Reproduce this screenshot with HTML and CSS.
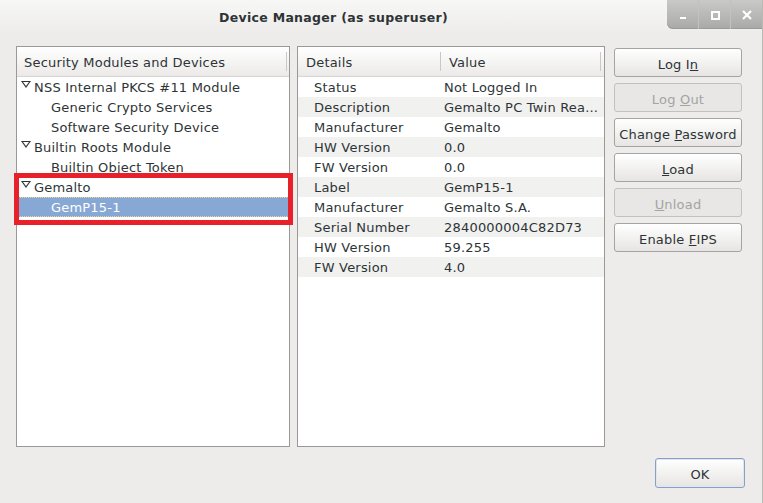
FILE: index.html
```html
<!DOCTYPE html>
<html lang="en">
<head>
    <meta charset="UTF-8">
    <title>Device Manager (as superuser)</title>
    <link rel="stylesheet" href="styles.css">
</head>
<body>
    <div class="window">
        <div class="titlebar">
            <div class="title">Device Manager (as superuser)</div>
            <div class="controls">
                <div class="ctl">
                    <svg width="10" height="10" viewBox="0 0 10 10"><rect x="2" y="7" width="6" height="2" fill="#fff"/></svg>
                </div>
                <div class="ctl">
                    <svg width="10" height="10" viewBox="0 0 10 10"><rect x="2" y="2" width="7" height="7" fill="none" stroke="#fff" stroke-width="2"/></svg>
                </div>
                <div class="ctl">
                    <svg width="12" height="12" viewBox="0 0 12 12"><path d="M2 2 L10 10 M10 2 L2 10" stroke="#fff" stroke-width="2.2"/></svg>
                </div>
            </div>
        </div>

        <div class="content">
            <div class="panes">
                <div class="pane tree">
                    <div class="header">
                        <div class="col">Security Modules and Devices</div>
                    </div>
                    <div class="row top"><span class="twisty"></span>NSS Internal PKCS #11 Module</div>
                    <div class="row child">Generic Crypto Services</div>
                    <div class="row child">Software Security Device</div>
                    <div class="row top"><span class="twisty"></span>Builtin Roots Module</div>
                    <div class="row child">Builtin Object Token</div>
                    <div class="row top"><span class="twisty"></span>Gemalto</div>
                    <div class="row child selected">GemP15-1</div>
                    <div class="highlight"></div>
                </div>

                <div class="pane details">
                    <div class="header">
                        <div class="col name">Details</div>
                        <div class="col value">Value</div>
                    </div>
                    <div class="drow"><span class="name">Status</span><span class="value">Not Logged In</span></div>
                    <div class="drow"><span class="name">Description</span><span class="value">Gemalto PC Twin Rea...</span></div>
                    <div class="drow"><span class="name">Manufacturer</span><span class="value">Gemalto</span></div>
                    <div class="drow"><span class="name">HW Version</span><span class="value">0.0</span></div>
                    <div class="drow"><span class="name">FW Version</span><span class="value">0.0</span></div>
                    <div class="drow"><span class="name">Label</span><span class="value">GemP15-1</span></div>
                    <div class="drow"><span class="name">Manufacturer</span><span class="value">Gemalto S.A.</span></div>
                    <div class="drow"><span class="name">Serial Number</span><span class="value">2840000004C82D73</span></div>
                    <div class="drow"><span class="name">HW Version</span><span class="value">59.255</span></div>
                    <div class="drow"><span class="name">FW Version</span><span class="value">4.0</span></div>
                </div>

                <div class="buttons">
                    <button class="btn">Log I<u>n</u></button>
                    <button class="btn" disabled>Log <u>O</u>ut</button>
                    <button class="btn">Change <u>P</u>assword</button>
                    <button class="btn"><u>L</u>oad</button>
                    <button class="btn" disabled><u>U</u>nload</button>
                    <button class="btn">Enable <u>F</u>IPS</button>
                </div>
            </div>

            <div class="footer">
                <button class="btn ok">OK</button>
            </div>
        </div>
    </div>
</body>
</html>
```

FILE: styles.css
```css
html, body {
    margin: 0;
    padding: 0;
}

body {
    width: 763px;
    height: 503px;
    overflow: hidden;
    background-color: #edecea;
    font-family: "DejaVu Sans", sans-serif;
    font-size: 13px;
    letter-spacing: 0.2px;
    color: #2e3436;
}

.window {
    display: flex;
    flex-direction: column;
    height: 503px;
    border-right: 1px solid #b8b8b5;
    box-sizing: border-box;
}

.titlebar {
    height: 35px;
    display: flex;
    background: linear-gradient(#f7f7f6, #edecea);
}

.title {
    flex: 1;
    text-align: center;
    font-weight: bold;
    font-size: 12.5px;
    letter-spacing: 0.3px;
    line-height: 36px;
    color: #2e3436;
}

.controls {
    display: flex;
    height: 29px;
    border-radius: 0 0 0 6px;
    background: linear-gradient(#c9c9c7, #a9a9a7);
    box-shadow: inset 0 -1px 0 #9a9a98;
}

.ctl {
    width: 31px;
    display: flex;
    align-items: center;
    justify-content: center;
    border-left: 1px solid #c2c2c0;
}

.ctl:first-child {
    border-left: none;
}

.content {
    flex: 1;
    display: flex;
    flex-direction: column;
    padding: 11px 17px 15px 16px;
}

.panes {
    display: flex;
    height: 401px;
}

.pane {
    background-color: #fff;
    border: 1px solid #9a9996;
    position: relative;
}

.tree {
    width: 272px;
}

.details {
    width: 306px;
    margin-left: 7px;
}

.header {
    height: 29px;
    display: flex;
    align-items: center;
    background: linear-gradient(#ffffff, #ebeae8);
    border-bottom: 1px solid #d6d5d2;
}

.col {
    height: 19px;
    line-height: 21px;
    padding-left: 7px;
    border-right: 1px solid #c9c8c5;
    flex: 1;
    white-space: nowrap;
    color: #2e3436;
}

.details .col.name {
    flex: none;
    width: 134px;
    padding-left: 8px;
}

.details .col.value {
    padding-left: 8px;
    margin-right: 3px;
}

.tree .col {
    margin-right: 2px;
}

.row {
    height: 20px;
    line-height: 22px;
    white-space: nowrap;
}

.row.top {
    padding-left: 4px;
}

.row.child {
    padding-left: 34px;
}

.twisty {
    display: inline-block;
    width: 0;
    height: 0;
    margin-right: 3px;
    vertical-align: 4px;
    border-left: 5px solid transparent;
    border-right: 5px solid transparent;
    border-top: 7px solid #2e3436;
    position: relative;
}

.twisty::after {
    content: "";
    position: absolute;
    left: -3px;
    top: -6px;
    border-left: 3px solid transparent;
    border-right: 3px solid transparent;
    border-top: 4px solid #fff;
}

.row.selected {
    background-color: #87a8d4;
    color: #fff;
    border-top: 1px dotted #e8d88a;
    border-bottom: 1px dotted #e8d88a;
    height: 18px;
    line-height: 20px;
}

.highlight {
    position: absolute;
    left: -3px;
    top: 126px;
    width: 269px;
    height: 42px;
    border: 5px solid #e8202a;
}

.drow {
    display: flex;
    height: 20px;
    line-height: 22px;
    white-space: nowrap;
}

.drow:nth-of-type(odd) {
    background-color: #f1f1f0;
}

.drow .name {
    width: 130px;
    padding-left: 16px;
}

.drow .value {
    flex: 1;
}

.buttons {
    display: flex;
    flex-direction: column;
    gap: 6px;
    margin-left: 9px;
    padding-top: 2px;
}

.btn {
    width: 128px;
    height: 29px;
    font-family: "DejaVu Sans", sans-serif;
    font-size: 13px;
    letter-spacing: 0.2px;
    color: #2e3436;
    background: linear-gradient(#ffffff, #e6e5e3);
    border: 1px solid #a5a4a0;
    border-radius: 3px;
    padding: 3px 0 0;
}

.btn:disabled {
    color: #a4a4a1;
    background: #e8e7e5;
    border-color: #c2c1bd;
}

.footer {
    display: flex;
    justify-content: flex-end;
    padding-top: 11px;
}

.ok {
    width: 90px;
    height: 30px;
    padding-top: 2px;
    border-color: #8aa0c2;
    box-shadow: inset 0 0 0 1px #dfe6f1;
}
```
